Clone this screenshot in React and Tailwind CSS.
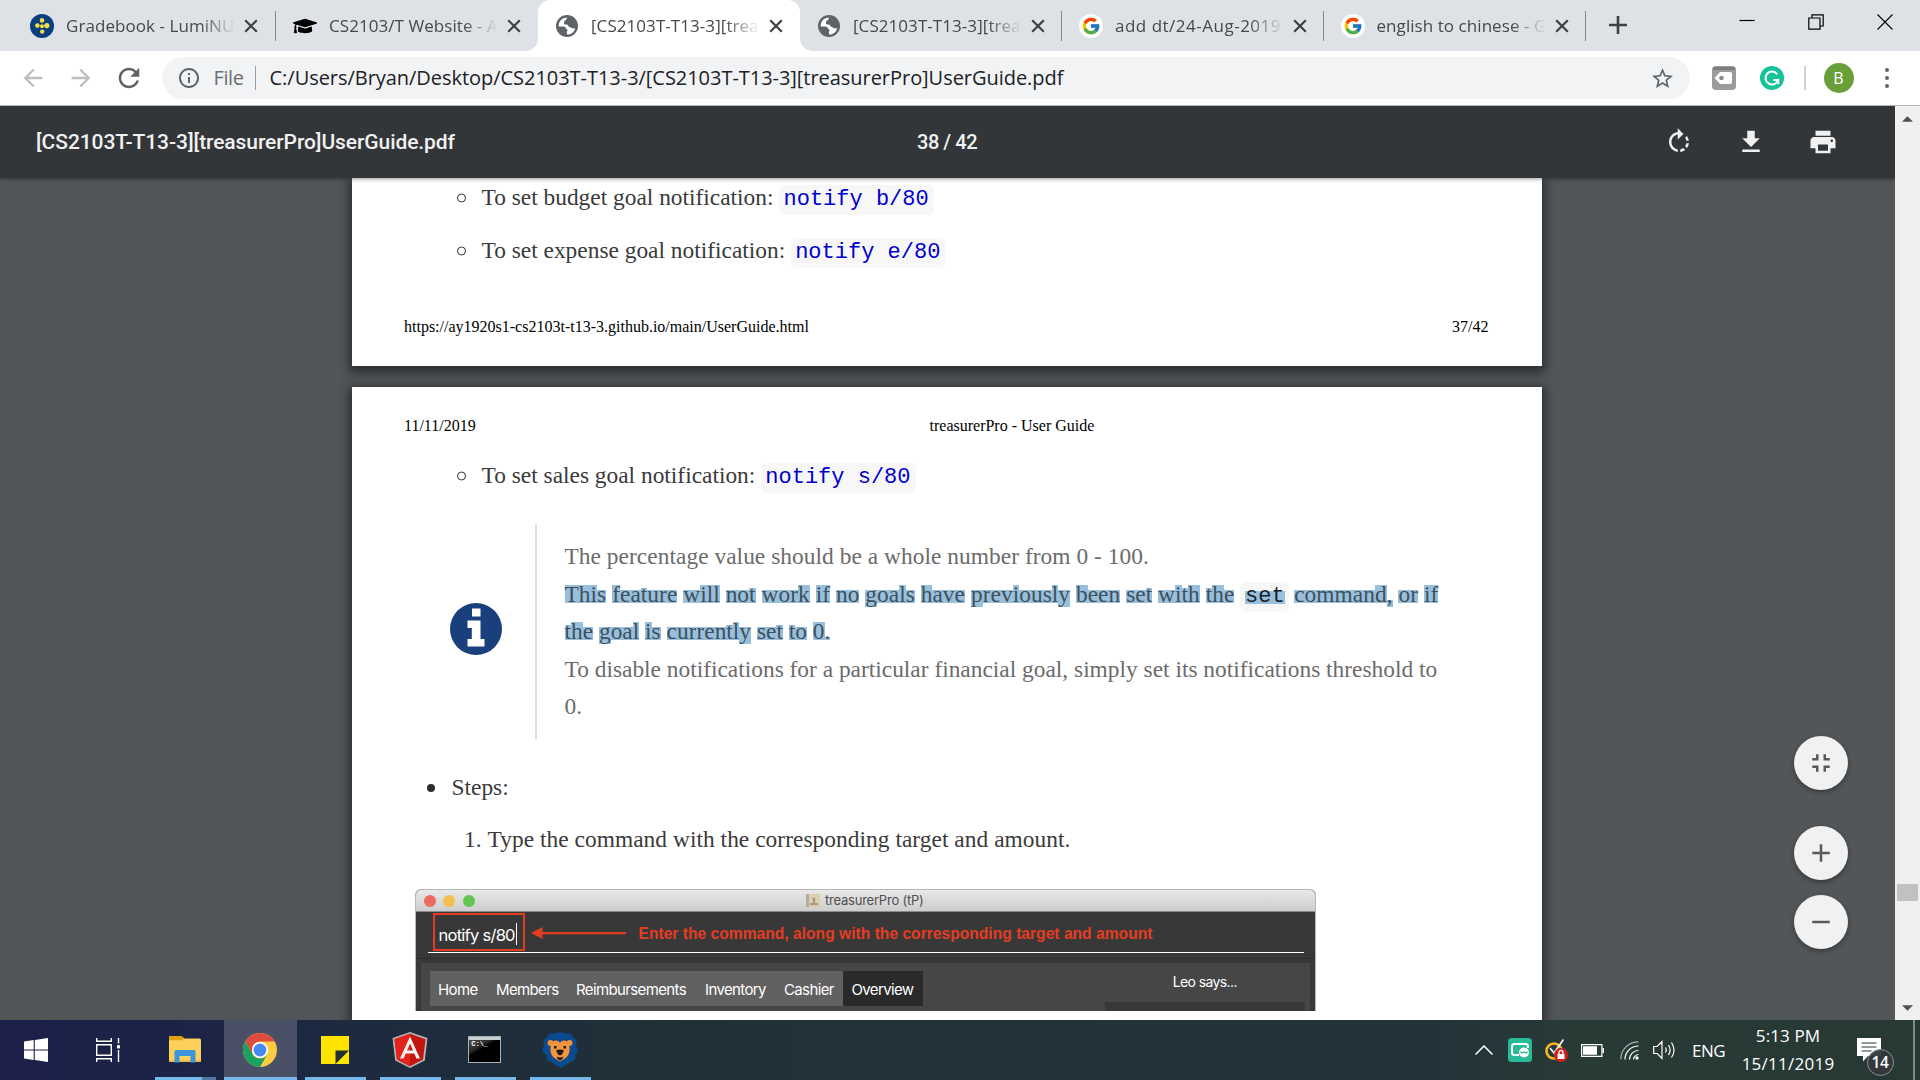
import React from 'react';
import {
  MdArrowBack, MdArrowForward, MdRefresh, MdStarBorder, MdInfoOutline,
  MdRotateRight, MdFileDownload, MdPrint, MdFullscreenExit, MdAdd, MdRemove,
} from 'react-icons/md';
import { FaGraduationCap } from 'react-icons/fa';
import { FcGoogle } from 'react-icons/fc';

const UI = "font-['Open_Sans',sans-serif]";
const SERIF = "font-['Liberation_Serif',serif]";
const MONO = "font-['Liberation_Mono',monospace]";

/* ---------- browser tabs ---------- */

function LumiIcon() {
  return (
    <svg viewBox="0 0 24 24" className="size-6">
      <circle cx="12" cy="12" r="12" fill="#0a3f7d" />
      <g fill="#f6dc4c">
        <circle cx="12" cy="6.4" r="2.3" />
        <circle cx="7.4" cy="11.6" r="2.3" />
        <circle cx="16.8" cy="11.6" r="2.6" />
        <circle cx="12" cy="12.2" r="2" />
        <circle cx="12.2" cy="17.6" r="2.2" />
      </g>
    </svg>
  );
}

function GlobeIcon() {
  return (
    <svg viewBox="0 0 22 22" className="mx-px size-[22px]">
      <circle cx="11" cy="11" r="11" fill="#5f6368" />
      <path fill="#fff" d="M11.5 2.8c-1.5 1.2-1 2.2-2.6 2.9-1.2.6-.6 2-.9 2.9-.2.9 1.200 1.100 2.200 1 1.500-.1 2.400.9 2.500 2.200.9.4 1.700.1 2.300.9.6.7 1.500.5 2.600.6l1.600.1c-.5 1.900-1.600 3.500-3.200 4.600-1.500 1-3.100 1.500-4.900 1.500l-.3-2c-.1-1 .8-1.500.7-2.300-.1-1-1.400-1-1.600-1.900-.3-1.200-1.200-1.900-2.500-1.900H2.700c-.2-3 1-5.600 3.400-7.300 1.600-1.100 3.400-1.600 5.400-1.300z" />
    </svg>
  );
}

function GoogleIcon() {
  return (
    <div className="flex size-6 items-center justify-center rounded-full bg-white">
      <FcGoogle className="size-[20px]" />
    </div>
  );
}

function Cross({ className }) {
  return (
    <svg viewBox="0 0 14 14" className={className} stroke="#3c4043" strokeWidth="2.200" fill="none">
      <path d="M1.200 1.200 12.800 12.800M12.800 1.200 1.200 12.800" />
    </svg>
  );
}

const tabs = [
  { icon: <LumiIcon />, title: 'Gradebook - LumiNU', sep: true, pad: 'pl-[16px]' },
  { icon: <FaGraduationCap className="size-6 text-black" />, title: 'CS2103/T Website - A', sep: false, pad: 'pl-[17px]' },
  { icon: <GlobeIcon />, title: '[CS2103T-T13-3][trea', sep: false, active: true, pad: 'pl-[17px]' },
  { icon: <GlobeIcon />, title: '[CS2103T-T13-3][trea', sep: true, pad: 'pl-[17px]' },
  { icon: <GoogleIcon />, title: 'add dt/24-Aug-2019', sep: true, pad: 'pl-[17px]', track: 'tracking-[0.500px]' },
  { icon: <GoogleIcon />, title: 'english to chinese - G', sep: true, pad: 'pl-[16.500px]' },
];

function Tab({ icon, title, sep, active, pad, track = 'tracking-[0.060px]' }) {
  return (
    <div className={`relative flex h-[51px] w-[262px] shrink-0 items-center ${pad} ${active ? 'rounded-t-[12px] bg-white' : ''}`}>
      {active && (
        <>
          <div className="absolute bottom-0 -left-[12px] size-[12px] bg-[radial-gradient(circle_at_0_0,transparent_11.500px,#fff_12px)]" />
          <div className="absolute -right-[12px] bottom-0 size-[12px] bg-[radial-gradient(circle_at_100%_0,transparent_11.500px,#fff_12px)]" />
        </>
      )}
      <div className="shrink-0">{icon}</div>
      <div className={`ml-3 w-[167px] overflow-hidden text-[17px] leading-6 whitespace-nowrap text-[#45494d] [mask-image:linear-gradient(to_right,black_134px,transparent_169px)] ${track} ${UI}`}>
        {title}
      </div>
      <Cross className="ml-[11px] size-[14px] shrink-0" />
      {sep && <div className="absolute top-[11px] right-0 h-[30px] w-[1.500px] bg-[#84878b]" />}
    </div>
  );
}

function TabStrip() {
  return (
    <div className="flex h-[51px] bg-[#dee1e6] pl-[14px]">
      {tabs.map((t, i) => <Tab key={i} {...t} />)}
      <svg viewBox="0 0 18 18" className="mt-[16px] ml-[23px] size-[18px]" stroke="#3c4043" strokeWidth="2.600">
        <path d="M9 0v18M0 9h18" />
      </svg>
      <div className="ml-auto flex pr-[27px]">
        <svg viewBox="0 0 16 16" className="mt-[13px] mr-[53px] size-4" stroke="#000" strokeWidth="1.200"><path d="M0.500 7.500h15" /></svg>
        <svg viewBox="0 0 16 16" className="mt-[14px] mr-[53px] size-4" stroke="#000" strokeWidth="1.200" fill="none">
          <path d="M.8 4h11.200v11.200H.8zM4 4V.8h11.200V12H12" />
        </svg>
        <svg viewBox="0 0 16 16" className="mt-[13.500px] size-4" stroke="#000" strokeWidth="1.100"><path d="M.5.5l15 15M15.500.5l-15 15" /></svg>
      </div>
    </div>
  );
}

/* ---------- address bar ---------- */

function TagExtension() {
  return (
    <svg viewBox="0 0 24 24" className="size-6">
      <rect width="24" height="24" rx="4" fill="#9b9b9b" />
      <rect x="1" y="1" width="22" height="3" rx="1.500" fill="#7d7d7d" />
      <path d="M2.500 12 8 6h10q2 0 2 2v8q0 2-2 2H8z" fill="#fff" />
      <circle cx="9.500" cy="12" r="2.300" fill="#8a8a8a" />
    </svg>
  );
}

function GrammarlyIcon() {
  return (
    <svg viewBox="0 0 24 24" className="size-6">
      <circle cx="12" cy="12" r="12" fill="#15c39a" />
      <path d="M17.300 8.300A6.500 6.500 0 1 0 18.200 14H13.500M18.300 18.200v-4.400" fill="none" stroke="#fff" strokeWidth="2" />
    </svg>
  );
}

function AddressBar() {
  return (
    <div className="flex h-[55px] items-center border-b border-[#b4b6b8] bg-white pl-[19px]">
      <div className="flex gap-5">
        <MdArrowBack className="size-7 text-[#bcbec0]" />
        <MdArrowForward className="size-7 text-[#bcbec0]" />
        <MdRefresh className="size-7 scale-110 text-[#5f6368]" />
      </div>
      <div className={`ml-[19px] flex h-[42px] w-[1528px] items-center rounded-full bg-[#f1f3f4] pr-[15px] pl-[15px] text-[20px] ${UI}`}>
        <MdInfoOutline className="size-6 text-[#5f6368]" />
        <span className="ml-[12.500px] tracking-[-0.400px] text-[#6b6f73]">File</span>
        <div className="mr-[13.500px] ml-[11px] h-6 w-[1.500px] bg-[#9aa0a6]" />
        <span className="tracking-[-0.040px] whitespace-nowrap text-[#202124]">
          C:/Users/Bryan/Desktop/CS2103T-T13-3/[CS2103T-T13-3][treasurerPro]UserGuide.pdf
        </span>
        <MdStarBorder className="ml-auto size-[25px] text-[#5f6368]" />
      </div>
      <div className="ml-[21.500px] flex items-center">
        <TagExtension />
        <div className="w-6" />
        <GrammarlyIcon />
        <div className="mr-[18px] ml-[20.500px] h-6 w-[1.500px] bg-[#cfd1d4]" />
        <div className={`flex size-[30px] items-center justify-center rounded-full bg-[#689f38] text-[16px] text-white ${UI}`}>B</div>
        <div className="ml-[31px] flex flex-col gap-1">
          <i className="size-1 rounded-full bg-[#5f6368]" />
          <i className="size-1 rounded-full bg-[#5f6368]" />
          <i className="size-1 rounded-full bg-[#5f6368]" />
        </div>
      </div>
    </div>
  );
}

/* ---------- PDF viewer ---------- */

function PdfToolbar() {
  return (
    <div className="relative z-10 flex h-[72px] items-center bg-[#323639] pl-[36px] font-[Roboto,sans-serif] text-[21px] font-medium text-[#f1f1f1] shadow-[0_1px_4px_rgba(0,0,0,0.4)]">
      <span className="w-[881px] pt-px tracking-[-0.080px]">[CS2103T-T13-3][treasurerPro]UserGuide.pdf</span>
      <span className="text-[20px] tracking-[-0.450px]">38 / 42</span>
      <div className="ml-auto flex gap-[42px] pr-[57px]">
        <MdRotateRight className="size-[30px]" />
        <MdFileDownload className="size-[30px]" />
        <MdPrint className="size-[30px]" />
      </div>
    </div>
  );
}

function Code({ children }) {
  return (
    <span className={`ml-[6px] h-[30px] rounded-[6px] bg-[#f7f7f8] pr-[5px] pl-[4px] text-[22px] leading-[30px] whitespace-pre ${MONO}`}>
      {children}
    </span>
  );
}

function NotifyItem({ label, code }) {
  return (
    <div className="flex h-8 items-baseline pl-[105px] leading-[30px]">
      <span className="mr-[15.500px] size-[9px] -translate-y-[2.500px] rounded-full border-[1.500px] border-[#333]" />
      <span>{label}</span>
      <Code><span className="text-[#0000cc]">{code}</span></Code>
    </div>
  );
}

const glyphBand = {
  tall: 'bg-[linear-gradient(transparent_17%,#98c0dc_17%,#98c0dc_86%,transparent_86%)]',
  mid: 'bg-[linear-gradient(transparent_28%,#98c0dc_28%,#98c0dc_86%,transparent_86%)]',
  low: 'bg-[linear-gradient(transparent_36%,#98c0dc_36%,#98c0dc_86%,transparent_86%)]',
  deep: 'bg-[linear-gradient(transparent_36%,#98c0dc_36%)]',
  dot: 'bg-[linear-gradient(transparent_74%,#98c0dc_74%,#98c0dc_86%,transparent_86%)]',
  comma: 'bg-[linear-gradient(transparent_74%,#98c0dc_74%)]',
};

function bandFor(ch) {
  if (ch === ' ') return '';
  if (ch === '.') return glyphBand.dot;
  if (ch === ',') return glyphBand.comma;
  if ('gpy'.includes(ch)) return glyphBand.deep;
  if (ch === 't') return glyphBand.mid;
  if ('Tbdfhikl0'.includes(ch)) return glyphBand.tall;
  return glyphBand.low;
}

function Selected({ text }) {
  return (
    <span className="text-[#3f505c]">
      {text.split('').map((ch, i) => <span key={i} className={bandFor(ch)}>{ch}</span>)}
    </span>
  );
}

function InfoNote() {
  return (
    <div className="mt-[32px] ml-[97.500px] flex h-[215px] items-center">
      <svg viewBox="0 0 52 52" className="mb-[5px] size-[52px]">
        <circle cx="26" cy="26" r="26" fill="#19407c" />
        <path fill="#fff" d="M22 5.500h8.500v8H22zM17.500 17.500h13v18.500h4v7.500h-17V36h4.300V25h-4.300z" />
      </svg>
      <div className="ml-[33.500px] h-full border-l-2 border-[#dddfd8] pt-[14px] pl-[27.500px] leading-[37.500px] whitespace-nowrap text-[#6b6b6b]">
        <div className="h-[37.500px] tracking-[0.040px]">The percentage value should be a whole number from 0 - 100.</div>
        <div className="flex h-[37.500px] items-baseline tracking-[0.030px]">
          <Selected text="This feature will not work if no goals have previously been set with the" />
          <span className={`mr-[5px] ml-[6px] h-[30px] rounded-[6px] bg-[#f7f7f8] px-[4.500px] text-[22px] leading-[30px] text-[#15202b] ${MONO}`}>
            <span className="bg-[linear-gradient(transparent_27%,#98c0dc_27%,#98c0dc_79%,transparent_79%)]">set</span>
          </span>
          <Selected text="command, or if" />
        </div>
        <div className="h-[37.500px]"><Selected text="the goal is currently set to 0." /></div>
        <div className="h-[37.500px]">To disable notifications for a particular financial goal, simply set its notifications threshold to</div>
        <div className="h-[37.500px]">0.</div>
      </div>
    </div>
  );
}

function MacWindow() {
  return (
    <div className="mt-[34.500px] ml-[63px] h-[122.500px] w-[901px] overflow-hidden rounded-t-[6px] border-x border-t border-[#b5b8b6] bg-[#383838] font-[Inter,sans-serif] text-white">
      <div className="flex h-[22.500px] items-center border-b border-[#8b8b8b] bg-gradient-to-b from-[#e8e8e8] to-[#cdcdcd] pt-px pl-[7.500px]">
        <i className="size-3 rounded-full bg-[#ec6a5e]" />
        <i className="ml-[7.500px] size-3 rounded-full bg-[#f5bf4f]" />
        <i className="ml-[7.500px] size-3 rounded-full bg-[#61c554]" />
        <div className="ml-[331px] flex h-[13px] w-[14px] items-end justify-center border-l-[3px] border-[#b1aca2] bg-[#ddcfae] pb-[2px]">
          <svg viewBox="0 0 8 8" className="size-2" fill="#a49a85"><circle cx="4" cy="2" r="1.500" /><path d="M0 8V6h3V3h2v3h3v2z" /></svg>
        </div>
        <span className="ml-[5.500px] text-[13px] tracking-[-0.220px] text-[#4f4f4f]">treasurerPro (tP)</span>
      </div>
      <div className="mr-[11px] ml-[12px] flex h-[41px] items-center border-b-[1.500px] border-white pb-px">
        <div className="ml-[4.500px] flex h-[38px] w-[92.500px] items-center border-[2.500px] border-[#e43d22] pl-[4px]">
          <span className="mt-[6px] text-[16.500px] leading-5 tracking-[-0.730px]">notify s/80</span>
          <i className="mt-[5px] ml-px h-[22px] w-px bg-white" />
        </div>
        <svg viewBox="0 0 95 12" className="mt-[2px] ml-[6px] h-3 w-[95px]" fill="#e43d22"><path d="M0 6 11.500 0v5h83.500v2.200H11.500V12z" /></svg>
        <span className="mt-[5px] ml-[12.500px] font-['Liberation_Sans',sans-serif] text-[15.630px] font-bold text-[#e43d22]">
          Enter the command, along with the corresponding target and amount
        </span>
      </div>
      <div className="h-[6px] border-b border-[#2c2c2c]" />
      <div className="mx-[5px] mt-[4px] flex h-[50px] bg-[#464646] pt-[8px] pl-[8.500px]">
        <div className="flex h-[35px] items-center bg-[#616161] text-[15px] tracking-[-0.630px]">
          <span className="w-[58px] pt-[3px] pl-[8.500px]">Home</span>
          <span className="w-[80px] pt-[3px] pl-[8.500px]">Members</span>
          <span className="w-[129px] pt-[3px] pl-[8.500px]">Reimbursements</span>
          <span className="w-[79px] pt-[3px] pl-[8.500px]">Inventory</span>
          <span className="w-[67.500px] pt-[3px] pl-[8.500px]">Cashier</span>
          <span className="flex h-full w-[79.500px] items-center bg-[#2a2a2a] pt-[3px] pl-[8.500px]">Overview</span>
        </div>
        <div className="ml-auto w-[200.500px] text-center text-[14px] leading-[20px] tracking-[-0.600px]">
          <span className="block pt-px">Leo says...</span>
          <div className="mt-[10px] h-5 w-[200.500px] bg-[#383838]" />
        </div>
        <div className="w-[5px]" />
      </div>
    </div>
  );
}

function PdfPages() {
  return (
    <div className={`pl-[352px] text-[23.400px] text-[#3a3a3a] ${SERIF}`}>
      <div className="flex h-[188px] w-[1189.500px] flex-col bg-white pt-[4px] shadow-[0_3px_10px_3px_rgba(0,0,0,0.5)]">
        <NotifyItem label="To set budget goal notification:" code="notify b/80" />
        <div className="h-[21px]" />
        <NotifyItem label="To set expense goal notification:" code="notify e/80" />
        <div className="mt-[49.500px] flex justify-between pr-[53px] pl-[52px] text-[16px] leading-5 text-black">
          <span>https://ay1920s1-cs2103t-t13-3.github.io/main/UserGuide.html</span>
          <span>37/42</span>
        </div>
      </div>
      <div className="mt-[21px] flex h-[700px] w-[1189.500px] flex-col bg-white pt-[29px] shadow-[0_3px_10px_3px_rgba(0,0,0,0.5)]">
        <div className="flex pl-[52px] text-[16px] leading-5 text-black">
          <span className="w-[525.500px]">11/11/2019</span>
          <span>treasurerPro - User Guide</span>
        </div>
        <div className="h-[24px]" />
        <NotifyItem label="To set sales goal notification:" code="notify s/80" />
        <InfoNote />
        <div className="mt-[33px] flex h-[30px] items-center pl-[75px] leading-[30px]">
          <i className="mt-px mr-[16.500px] size-2 rounded-full bg-[#2d2d2d]" />
          <span>Steps:</span>
        </div>
        <div className="mt-[22px] flex h-[30px] pl-[112px] leading-[30px]">
          <span className="w-[23.500px]">1.</span>
          <span className="tracking-[0.040px]">Type the command with the corresponding target and amount.</span>
        </div>
        <MacWindow />
      </div>
    </div>
  );
}

const fab = 'flex size-[54px] items-center justify-center rounded-full bg-[#f1f1f1] text-[#5a5a5a] shadow-[0_2px_5px_rgba(0,0,0,0.35)]';

function Viewer() {
  return (
    <div className="flex h-[914px]">
      <div className="relative h-full w-[1895px] overflow-hidden bg-[#525659]">
        <PdfToolbar />
        <PdfPages />
        <div className="absolute top-[630px] right-[47px] flex flex-col">
          <div className={fab}><MdFullscreenExit className="size-[30px]" /></div>
          <div className={fab + ' mt-[36px]'}><MdAdd className="size-[30px]" /></div>
          <div className={fab + ' mt-[15px]'}><MdRemove className="size-[30px]" /></div>
        </div>
      </div>
      <div className="flex w-[25px] flex-col items-center bg-[#f0f0f0]">
        <svg viewBox="0 0 12 6" className="mt-[10px] h-[6px] w-[11px]" fill="#505050"><path d="M0 6 6 0l6 6z" /></svg>
        <div className="mt-[762px] h-[17px] w-[21px] bg-[#c1c1c1]" />
        <svg viewBox="0 0 12 6" className="mt-auto mb-[9.500px] h-[6px] w-[11px]" fill="#505050"><path d="M0 0h12L6 6z" /></svg>
      </div>
    </div>
  );
}

/* ---------- Windows taskbar ---------- */

function WindowsLogo() {
  return (
    <svg viewBox="0 0 24 24" className="size-6" fill="#fff">
      <path d="M0 3.400 9.700 2v9.400H0zM10.800 1.900 24 0v11.400H10.800zM0 12.500h9.700V22L0 20.600zM10.800 12.500H24V24l-13.200-1.900z" />
    </svg>
  );
}

function TaskViewIcon() {
  return (
    <svg viewBox="0 0 24 24" className="size-6" fill="none" stroke="#fff" strokeWidth="1.400">
      <path d="M.7 0v3.300h14.600V0M.7 24v-3.300h14.600V24M.7 6.700h14.600v10.600H.7zM22.500 0v5.500M22.500 12v12" />
      <path d="M21 7.200h3v3.200h-3z" fill="#fff" stroke="none" />
    </svg>
  );
}

function FolderIcon() {
  return (
    <svg viewBox="0 0 32 27" className="h-[27px] w-8">
      <path d="M0 1.500Q0 0 1.500 0h11L15 2.500h15.500Q32 2.500 32 4v22H0z" fill="#fdd05b" />
      <path d="M0 1.500Q0 0 1.500 0h11L15 2.300 13 4.200H0z" fill="#e0a110" />
      <path d="M0 24h32v2H0z" fill="#f3bb3c" />
      <path d="M5.500 26.500v-11q0-1.500 1.500-1.500h18q1.500 0 1.500 1.500v11h-5V20h-11v6.500z" fill="#3b94dc" />
    </svg>
  );
}

function ChromeIcon() {
  return (
    <svg viewBox="0 0 34 34" className="size-[34px]">
      <circle cx="17" cy="17" r="17" fill="#fdcb43" />
      <path d="M2.300 8.500A17 17 0 0 1 31.700 8.500H17a8.500 8.500 0 0 0-7.400 4.300l-.5 8z" fill="#dd4b3e" />
      <path d="M2.300 8.500A17 17 0 0 0 17 34l7.400-12.800A8.500 8.500 0 0 1 9.600 21.200z" fill="#1ba160" />
      <circle cx="17" cy="17" r="8" fill="#fff" />
      <circle cx="17" cy="17" r="6.400" fill="#4688f1" />
    </svg>
  );
}

function StickyIcon() {
  return (
    <svg viewBox="0 0 28 28" className="size-7">
      <path d="M0 0h28v28H0z" fill="#ffe400" />
      <path d="M14.500 14.500H28L14.500 28z" fill="#22302f" />
    </svg>
  );
}

function AngularIcon() {
  return (
    <svg viewBox="0 0 36 36" className="size-9">
      <path d="M18 0 35.500 6l-2.700 22.500L18 36 3.200 28.500.5 6z" fill="#b3b3b3" />
      <path d="M18 1.800 33.500 7.200 31 27.500 18 34.200 5 27.500 2.500 7.200z" fill="#c3150f" />
      <path d="M18 1.800V34.200L5 27.500 2.500 7.200z" fill="#e2221b" />
      <path d="M18 4.500 28 26.500h-3.700l-2-5h-8.600l-2 5H8zM18 11.500l-3 7h6z" fill="#f4f4f4" />
    </svg>
  );
}

function TerminalIcon() {
  return (
    <div className="flex h-[27px] w-[33px] flex-col border-[1.500px] border-[#a9b0b3] bg-black">
      <div className="h-[3px] shrink-0 bg-[#c9ced1]" />
      <div className="h-[22px] bg-[linear-gradient(150deg,#4a4a4a_0,#2b2b2b_30%,#000_42%)] pl-[2px] font-['Liberation_Mono',monospace] text-[7px] leading-[9px] font-bold text-white">C:\_</div>
    </div>
  );
}

function LionIcon() {
  return (
    <svg viewBox="0 0 36 36" className="size-9">
      <path d="M18 0l5 1.500 5-.5 3 4 3.500 4-.5 5 2 5-2.500 4-.5 5-4 2-4 2.500-6 3.500-6-3.500-4-2.500-4-2-.5-5L0 19l2-5-.5-5L5 5l3-4 5 .5z" fill="#0b4a8c" />
      <circle cx="8.500" cy="11" r="3" fill="#f0913a" />
      <circle cx="27.500" cy="11" r="3" fill="#f0913a" />
      <path d="M18 11c2-3 5-3 7-1 2 2 2.800 5 2.600 8-.3 4-2 7-4.600 8.500l-5 3-5-3c-2.600-1.500-4.300-4.500-4.600-8.500-.2-3 .6-6 2.600-8 2-2 5-2 7 1z" fill="#f4953d" />
      <path d="M14 18.500q4-2 8 0l-2 4-2 1-2-1zM12 14h2.500v2.500H12zM21.500 14H24v2.500h-2.500z" fill="#1d1a1a" />
      <path d="M14.500 24.500q3.500 2 7 0L20 27.500l-2 1-2-1z" fill="#1d1a1a" />
    </svg>
  );
}

const apps = [
  { icon: <FolderIcon />, box: 'w-[61px] ml-[35px]' },
  { icon: <ChromeIcon />, box: 'w-[73px] ml-[8px] bg-[#4a5166]' },
  { icon: <StickyIcon />, box: 'w-[61px] ml-[8px]' },
  { icon: <AngularIcon />, box: 'w-[61px] ml-[14px]' },
  { icon: <TerminalIcon />, box: 'w-[61px] ml-[14px]' },
  { icon: <LionIcon />, box: 'w-[61px] ml-[14px]' },
];

function Tray() {
  return (
    <div className={`ml-auto flex h-full items-center text-white ${UI}`}>
      <svg viewBox="0 0 18 10" className="h-[10px] w-[18px]" fill="none" stroke="#fff" strokeWidth="1.500"><path d="M.5 9.500 9 1l8.500 8.500" /></svg>
      <svg viewBox="0 0 24 24" className="ml-[15px] size-6">
        <rect width="24" height="24" rx="3.500" fill="#28ba98" />
        <path d="M11 17H6.500Q4 17 4 14.500v-6Q4 6 6.500 6h11Q20 6 20 8.500V10" fill="none" stroke="#fff" strokeWidth="2" />
        <circle cx="16" cy="14.500" r="5" fill="#fff" />
        <path d="M12.500 13.500l1.500 1.500 2-1 2 1 1.500-1.500" fill="none" stroke="#28ba98" strokeWidth="1.200" />
      </svg>
      <svg viewBox="0 0 23 23" className="ml-[13px] size-[23px]">
        <circle cx="9" cy="12" r="7.500" fill="none" stroke="#fbb825" strokeWidth="2.600" />
        <path d="M5 9l4 5L18.500.5" fill="none" stroke="#f0f0f0" strokeWidth="1.800" />
        <circle cx="16" cy="16" r="7" fill="#cf1f1c" />
        <path d="M12.500 15h7v5h-7z" fill="#fff" />
        <path d="M14 15v-1.500a2 2 0 0 1 4 0V15" fill="none" stroke="#fff" strokeWidth="1.300" />
      </svg>
      <svg viewBox="0 0 23 13" className="ml-[13px] h-[13px] w-[23px]">
        <path d="M.6.6h20.300v11.800H.6z" fill="none" stroke="#fff" strokeWidth="1.200" />
        <path d="M2 2.200h14v8.600H2zM21.500 4H23v5h-1.500z" fill="#fff" />
      </svg>
      <svg viewBox="0 0 19 19" className="mt-px ml-4 size-[19px]" fill="none" stroke="#fff" strokeWidth="1.200">
        <path d="M.8 18.500C.8 8.500 8.500.8 18.500.8" stroke="#a9b2b2" />
        <path d="M5 18.500C5 11 11 5 18.500 5M9.500 18.500c0-5 4-9 9-9M13.500 18.500c0-2.500 2.500-5 5-5" />
        <circle cx="17" cy="17" r="1.700" fill="#fff" stroke="none" />
      </svg>
      <svg viewBox="0 0 23 20" className="ml-[14px] h-5 w-[23px]" fill="none" stroke="#fff" strokeWidth="1.200">
        <path d="M.7 6.500h3.500L9 1.500v17l-4.800-5H.7zM12.500 7.500q1.500 2.500 0 5M15.500 5q3.200 5 0 10M18.500 2.500q5 7.500 0 15" />
      </svg>
      <span className="mt-px ml-[16.500px] w-[34px] text-[17px] leading-6 tracking-[-0.500px]">ENG</span>
      <div className="ml-[14px] flex w-[96px] flex-col items-center text-[17px] leading-[28px] whitespace-nowrap">
        <span className="tracking-[0.100px]">5:13 PM</span>
        <span className="tracking-[0.250px]">15/11/2019</span>
      </div>
      <div className="relative ml-[21px] h-full w-[56px]">
        <svg viewBox="0 0 24 24" className="mt-[18px] size-6">
          <path d="M0 0h24v18H11l-5 5.500V18H0z" fill="#fff" />
          <path d="M4.500 5h15M4.500 9h15M4.500 13h10" stroke="#273834" strokeWidth="1.200" />
        </svg>
        <div className="absolute top-[29px] left-[9.500px] flex size-[27px] items-center justify-center rounded-full border-[1.500px] border-[#8b9392] bg-[#33383a]/95 text-[15.500px] font-semibold tracking-[-0.300px]">14</div>
      </div>
      <div className="h-full w-[2px] bg-[#7f8c88]" />
      <div className="w-[5px]" />
    </div>
  );
}

function Taskbar() {
  return (
    <div className="flex h-[60px] items-center bg-[linear-gradient(90deg,#1d2049_0,#1b2347_180px,#1d2a3f_340px,#1f3037_640px,#22343a_1100px,#22343a_1440px,#273a36_1560px,#283935_100%)]">
      <div className="flex w-[120px] items-center justify-between pl-6"><WindowsLogo /><TaskViewIcon /></div>
      {apps.map((a, i) => (
        <div key={i} className={'flex h-full shrink-0 flex-col items-center ' + a.box}>
          <div className="flex h-[57px] items-center justify-center pt-[2px] pr-[1.500px]">{a.icon}</div>
          <div className={'h-[3px] w-full ' + (i === 0 ? 'bg-[linear-gradient(90deg,#76b9ed_47px,#55789f_47px)]' : 'bg-[#76b9ed]')} />
        </div>
      ))}
      <Tray />
    </div>
  );
}

export default function App() {
  return (
    <div className="flex h-[1080px] w-[1920px] flex-col overflow-hidden bg-[#525659]">
      <TabStrip />
      <AddressBar />
      <Viewer />
      <Taskbar />
    </div>
  );
}
